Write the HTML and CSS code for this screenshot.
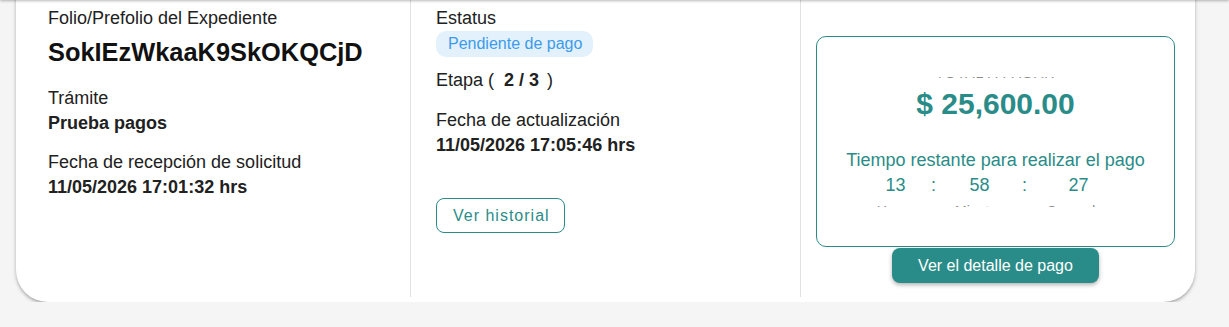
FILE: index.html
```html
<!DOCTYPE html>
<html lang="es">
<head>
<meta charset="utf-8">
<link rel="stylesheet" href="styles.css">
</head>
<body>
<div class="appbar-shadow"></div>
<main class="page">
  <section class="card">
    <div class="col col-info">
      <div class="label">Folio/Prefolio del Expediente</div>
      <div class="folio">SokIEzWkaaK9SkOKQCjD</div>
      <div class="field">
        <div class="label">Trámite</div>
        <div class="value">Prueba pagos</div>
      </div>
      <div class="field">
        <div class="label">Fecha de recepción de solicitud</div>
        <div class="value">11/05/2026 17:01:32 hrs</div>
      </div>
    </div>
    <div class="col col-status">
      <div class="label">Estatus</div>
      <span class="chip">Pendiente de pago</span>
      <div class="etapa">Etapa ( <b class="etapa-num">2 / 3</b> )</div>
      <div class="field field-upd">
        <div class="label">Fecha de actualización</div>
        <div class="value">11/05/2026 17:05:46 hrs</div>
      </div>
      <button class="btn-outline">Ver historial</button>
    </div>
    <div class="col col-pay">
      <div class="pay-box">
        <div class="pay-viewport">
          <div class="pay-title">TOTAL A PAGAR</div>
          <div class="amount">$ 25,600.00</div>
          <div class="remaining">Tiempo restante para realizar el pago</div>
          <div class="timer">
            <div class="unit u-h"><span class="num">13</span><span class="unit-label">Horas</span></div>
            <div class="sep">:</div>
            <div class="unit u-m"><span class="num">58</span><span class="unit-label">Minutos</span></div>
            <div class="sep">:</div>
            <div class="unit u-s"><span class="num">27</span><span class="unit-label">Segundos</span></div>
          </div>
        </div>
      </div>
      <button class="btn-solid">Ver el detalle de pago</button>
    </div>
  </section>
</main>
</body>
</html>
```

FILE: styles.css
```css
html, body {
  margin: 0;
  padding: 0;
  background: #f5f5f5;
  font-family: "Liberation Sans", Arial, sans-serif;
  color: #212121;
  overflow: hidden;
}

.appbar-shadow {
  position: fixed;
  left: 0;
  right: 0;
  top: -10px;
  height: 10px;
  background: #f5f5f5;
  box-shadow: 0 1px 3px rgba(0, 0, 0, 0.28);
  z-index: 5;
}

.page {
  padding: 0 34px 0 16px;
}

.card {
  margin-top: -20px;
  background: #fff;
  border-radius: 0 0 32px 32px;
  box-shadow: 0 2px 3px rgba(0, 0, 0, 0.25), 0 1px 6px rgba(0, 0, 0, 0.08);
  display: grid;
  grid-template-columns: 394px 390px 1fr;
  padding-bottom: 5px;
}

.col {
  padding: 26px 0 14px;
  display: flex;
  flex-direction: column;
  align-items: flex-start;
}

.col + .col {
  border-left: 1px solid #e2e2e2;
}

.col-info {
  padding-left: 32px;
}

.col-status {
  padding-left: 25px;
}

.col-pay {
  padding-left: 15px;
  padding-right: 20px;
  align-items: stretch;
}

.label {
  font-size: 18px;
  line-height: 24px;
  color: #212121;
}

.value {
  font-size: 18px;
  line-height: 24px;
  font-weight: 700;
  margin-top: 1px;
}

.folio {
  font-size: 25.4px;
  line-height: 32px;
  font-weight: 700;
  color: #111;
  margin-top: 6px;
  margin-bottom: 18px;
}

.field + .field {
  margin-top: 15px;
}

.chip {
  margin-top: 1px;
  height: 26px;
  line-height: 26px;
  padding: 0 11px 0 12px;
  border-radius: 10px;
  background: #e3f1fc;
  color: #3d9be9;
  font-size: 16px;
}

.etapa {
  margin-top: 11px;
  font-size: 18px;
  line-height: 24px;
}

.etapa-num {
  padding: 0 3px 0 5px;
}

.field-upd {
  margin-top: 16px;
}

.btn-outline {
  margin-top: 41px;
  height: 35px;
  padding: 0 14px 0 16px;
  border: 1px solid #2a8c88;
  border-radius: 8px;
  background: #fff;
  color: #2a8c88;
  font-family: inherit;
  font-size: 16px;
  letter-spacing: 1px;
}

.pay-box {
  margin-top: 30px;
  border: 1px solid #2a8c88;
  border-radius: 10px;
  padding: 40px 0 39px;
}

.pay-viewport {
  height: 130px;
  overflow: hidden;
  text-align: center;
  color: #2a8c88;
}

.pay-title {
  margin-top: -12.5px;
  font-size: 14px;
  line-height: 16px;
  color: #8a8a8a;
  letter-spacing: 1px;
}

.amount {
  margin-top: 5.5px;
  font-size: 30px;
  line-height: 36px;
  font-weight: 700;
}

.remaining {
  margin-top: 26px;
  font-size: 18px;
  line-height: 24px;
}

.timer {
  margin-top: 1px;
  display: grid;
  grid-template-columns: 50px 26px 66px 24px 84px;
  justify-content: center;
  font-size: 18px;
}

.unit {
  display: flex;
  flex-direction: column;
  align-items: center;
}

.num, .sep {
  line-height: 24px;
}

.unit-label {
  margin-top: 6px;
  font-size: 14px;
  line-height: 16px;
  color: #8a8a8a;
}

.btn-solid {
  align-self: center;
  margin-top: 1px;
  height: 35px;
  width: 207px;
  border: none;
  border-radius: 8px;
  background: #2a8c88;
  color: #fff;
  font-family: inherit;
  font-size: 16px;
  box-shadow: 0 2px 4px rgba(0, 0, 0, 0.3);
}
```
